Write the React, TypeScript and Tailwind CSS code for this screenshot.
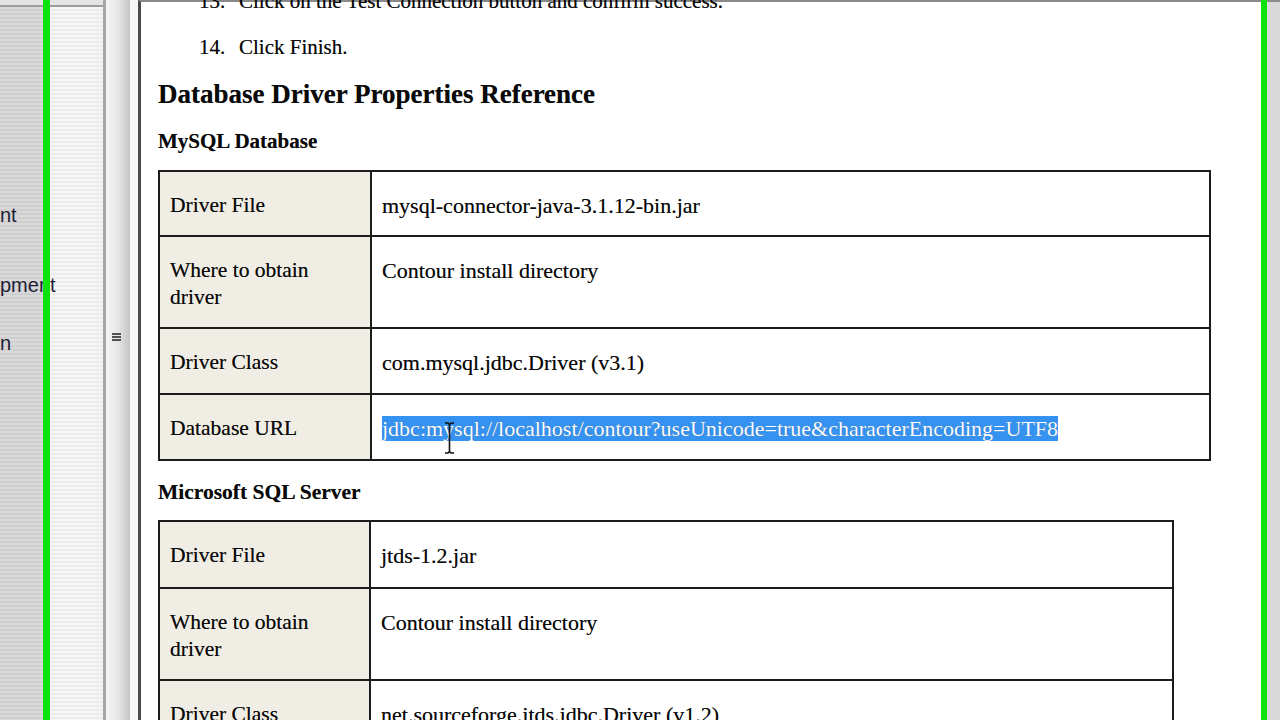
const mysqlRows = [
  { label: ["Driver File"], value: "mysql-connector-java-3.1.12-bin.jar" },
  { label: ["Where to obtain", "driver"], value: "Contour install directory" },
  { label: ["Driver Class"], value: "com.mysql.jdbc.Driver (v3.1)" },
  { label: ["Database URL"], value: "jdbc:mysql://localhost/contour?useUnicode=true&characterEncoding=UTF8", selected: true },
];

const mssqlRows = [
  { label: ["Driver File"], value: "jtds-1.2.jar" },
  { label: ["Where to obtain", "driver"], value: "Contour install directory" },
  { label: ["Driver Class"], value: "net.sourceforge.jtds.jdbc.Driver (v1.2)" },
  { label: ["Database URL"], value: "jdbc:jtds:sqlserver://localhost/contour" },
];

type Row = { label: string[]; value: string; selected?: boolean };

function DriverTable({ rows, width, labelWidth, top, firstRow }: { rows: Row[]; width: string; labelWidth: string; top: string; firstRow: string }) {
  return (
    <table className={`${width} ${top} border-collapse border-2 border-[#1c1c1c]`}>
      <tbody>
        {rows.map((r, i) => (
          <tr key={r.label.join(" ")} className={r.label.length > 1 ? "h-[92px]" : i === 0 ? firstRow : "h-[66px]"}>
            <td className={`${labelWidth} align-top border-2 border-[#1c1c1c] bg-[#f0ede4] pl-[10px] pt-[20px] pb-0 leading-[27px] text-[21.5px]`}>
              {r.label.map((l) => (
                <div key={l}>{l}</div>
              ))}
            </td>
            <td className="align-top border-2 border-[#1c1c1c] bg-white pl-[10px] pt-[20px] pb-0 leading-[27px] text-[22px] whitespace-nowrap">
              {r.selected ? <span className="bg-[#3592f0] text-white">{r.value}</span> : r.value}
            </td>
          </tr>
        ))}
      </tbody>
    </table>
  );
}

export default function App() {
  return (
    <div className="relative w-[1280px] h-[720px] overflow-hidden flex bg-white">
      {/* Left explorer pane */}
      <div className="w-[103px] flex flex-col bg-[#e4e4e4]">
        <div className="h-[5px]" />
        <div className="flex-1 flex border-t-2 border-[#9c9c9c] bg-[repeating-linear-gradient(180deg,#f6f6f6_0px,#f6f6f6_2px,#ececec_2px,#ececec_4px)]">
          <div className="w-[46px] flex flex-col font-['Liberation_Sans'] text-[20px] leading-[24px] text-[#1e1e38] whitespace-nowrap bg-[repeating-linear-gradient(180deg,#d9d9d9_0px,#d9d9d9_2px,#cfcfcf_2px,#cfcfcf_4px)]">
            <div className="mt-[196px]">nt</div>
            <div className="mt-[46px]">pment</div>
            <div className="mt-[34px]">n</div>
          </div>
        </div>
      </div>

      {/* Splitter */}
      <div className="w-[27px] border-l-[3px] border-[#a6a6a6] bg-gradient-to-r from-[#f6f6f6] via-[#e6e6e6] to-[#c4c4c4] flex flex-col items-center">
        <div className="mt-[333px] flex flex-col gap-[1px] -ml-[4px]">
          <div className="w-[9px] h-[2px] bg-[#505050]" />
          <div className="w-[9px] h-[2px] bg-[#505050]" />
          <div className="w-[9px] h-[2px] bg-[#505050]" />
        </div>
      </div>
      <div className="w-[8px] bg-[#f7f7f7]" />

      {/* Document */}
      <div className="flex-1 border-l-[3px] border-[#4a4a4a] border-t-2 border-t-[#8a8a8a] pl-[17px] font-['Liberation_Serif'] text-[21px] text-[#0a0a0a] [text-shadow:0_0_0.6px_rgba(0,0,0,0.55)]">
        <div className="-mt-[24px]">
          <div className="flex leading-[46px] whitespace-nowrap">
            <span className="ml-[41px] w-[40px]">13.</span>
            <span>Click on the Test Connection button and confirm success.</span>
          </div>
          <div className="flex leading-[46px]">
            <span className="ml-[41px] w-[40px]">14.</span>
            <span>Click Finish.</span>
          </div>
        </div>
        <h1 className="mt-[7px] text-[27px] font-bold leading-[34px]">Database Driver Properties Reference</h1>
        <h2 className="mt-[16px] text-[21px] font-bold leading-[28px]">MySQL Database</h2>
        <DriverTable rows={mysqlRows} width="w-[1053px]" labelWidth="w-[212px]" top="mt-[15px]" firstRow="h-[65px]" />
        <h2 className="mt-[17px] text-[21.5px] font-bold leading-[28px]">Microsoft SQL Server</h2>
        <DriverTable rows={mssqlRows} width="w-[1016px]" labelWidth="w-[211px]" top="mt-[14px]" firstRow="h-[67px]" />
      </div>
      <div className="w-[15px] bg-[#d9d9d9] border-t-2 border-[#8a8a8a]" />

      {/* Recording frame markers */}
      <div className="absolute left-[43px] top-0 w-[7px] h-full bg-[#0ce30c]" />
      <div className="absolute left-[1261px] top-0 w-[6px] h-full bg-[#0ce30c]" />

      {/* Text cursor */}
      <svg className="absolute left-[444px] top-[422px]" width="11" height="32" viewBox="0 0 11 32">
        <path d="M1 1h3l1.5 1.5L7 1h3M5.5 2.5v27M1 31h3l1.5-1.5L7 31h3" stroke="#111" strokeWidth="1.6" fill="none" />
      </svg>
    </div>
  );
}
